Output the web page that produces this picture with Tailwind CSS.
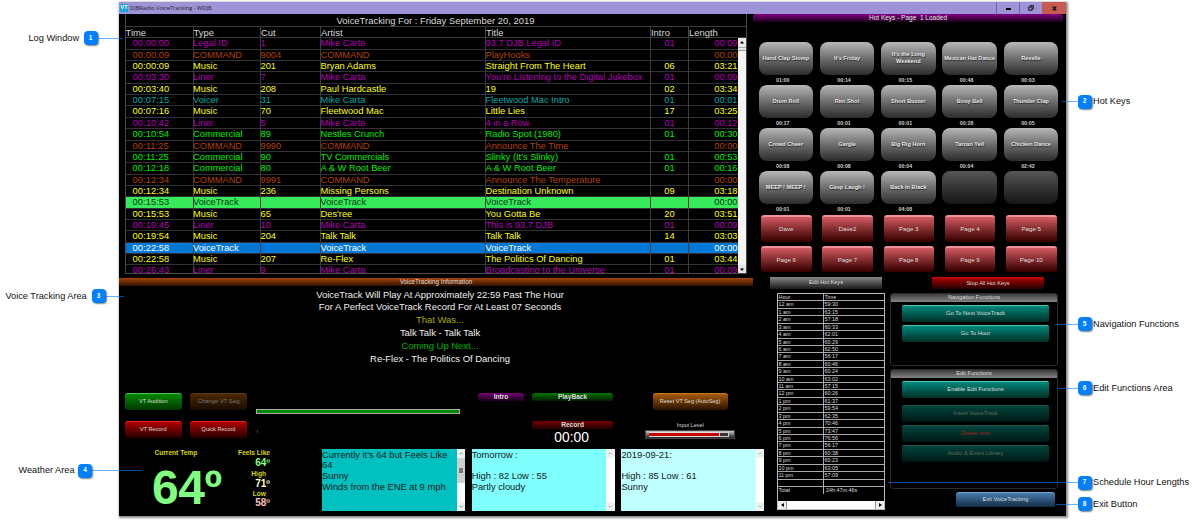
<!DOCTYPE html>
<html lang="en">
<head>
    <meta charset="UTF-8">
    <meta name="viewport" content="width=device-width, initial-scale=1.0">
    <title>DJBRadio VoiceTracking - WDJB</title>
    <script src="https://cdn.jsdelivr.net/npm/@tailwindcss/browser@4"></script>
</head>
<body class="relative w-[1199px] h-[520px] overflow-hidden bg-white font-['Liberation_Sans',Arial,sans-serif] text-[9.3px] leading-none whitespace-nowrap">

    <!-- Application window -->
    <div class="ml-[119px] mt-[2px] w-[947px] h-[514px] bg-black text-white shadow-[1px_1px_2px_1px_rgba(0,0,0,0.45)]">

        <!-- Title bar -->
        <div class="flex h-[12px] bg-[#9f93d8] text-[#222] text-[6.4px]">
            <div class="ml-[1px] mr-[2px] w-[8px] h-[8px] mt-[2px] bg-[#16a5dc] text-white text-[5.5px] font-bold flex items-center justify-center">VT</div>
            <div class="flex-1 pt-[3px] font-['Open_Sans',sans-serif] text-[5.7px] leading-[6px]">DJBRadio VoiceTracking - WDJB</div>
            <div class="w-[23px] border-l border-[#6e659c] flex items-center justify-center"><span class="w-[5px] h-[1.5px] mt-[2px] bg-black"></span></div>
            <div class="w-[23px] border-l border-[#6e659c] flex items-center justify-center">
                <svg class="w-[6px] h-[6px]" viewBox="0 0 6 6" fill="none" stroke="#111" stroke-width="1"><path d="M2 1.5V.7h3.3v3.2h-.8"/><rect x=".8" y="2" width="3.2" height="3.2"/></svg>
            </div>
            <div class="w-[24px] bg-[#c65a50] flex items-center justify-center">
                <svg class="w-[5px] h-[5px]" viewBox="0 0 5 5" stroke="#111" stroke-width="1.3"><path d="M.7.5l3.6 4M4.3.5L.7 4.5"/></svg>
            </div>
        </div>

        <!-- Log and hot keys -->
        <div class="flex h-[263px]">
            <div class="w-[634px] pl-[5.5px]">
                <div class="w-[622px] h-[260px] border border-t-0 border-[#4a4a4a] overflow-hidden text-[#d8d8d8]">
                    <div class="h-[12px] text-center text-[9.45px] leading-[13px]">VoiceTracking For : Friday September 20, 2019</div>
                    <div class="grid grid-cols-[67px_67.5px_60px_165px_165px_38px_57.5px] h-[12.3px] border-y border-[#3a3a3a] leading-[11px] text-[9.45px]">
                        <div>Time</div>
                        <div class="border-l border-[#444]">Type</div>
                        <div class="border-l border-[#444]">Cut</div>
                        <div class="border-l border-[#444]">Artist</div>
                        <div class="border-l border-[#444]">Title</div>
                        <div class="border-l border-[#444]">Intro</div>
                        <div class="border-l border-[#444]">Length</div>
                    </div>
                    <div class="flex h-[235px]">
                        <div id="log" class="w-[612px] overflow-hidden"></div>
                        <div class="w-[8px] bg-[#f4f4f4] flex flex-col items-center justify-between text-black">
                            <div class="w-full h-[13px] bg-[#e8e8e8] border-b border-[#999] flex flex-col items-center pt-[3px]">
                                <svg class="w-[4px] h-[3px]" viewBox="0 0 4 3"><path d="M0 2.5L2 0l2 2.5z"/></svg>
                                <span class="w-full border-t border-[#aaa] mt-[3px]"></span>
                            </div>
                            <div class="w-full h-[8px] bg-[#e4e4e4] flex items-center justify-center">
                                <svg class="w-[4px] h-[3px]" viewBox="0 0 4 3"><path d="M0 .5L2 3 4 .5z"/></svg>
                            </div>
                        </div>
                    </div>
                </div>
            </div>
            <div class="flex-1">
                <div class="w-[310px] h-[8px] rounded-t-[3px] bg-linear-to-b from-[#850085] to-[#1c001c] text-center text-[6.5px] leading-[8px] text-[#e8e8e8]">Hot Keys - Page &nbsp;1 Loaded</div>
                <div id="hotKeys" class="mt-[20px] ml-[5.5px] grid grid-cols-[repeat(5,54.5px)] gap-x-[6.8px]"></div>
                <div id="pages" class="ml-[8px] mt-[1px] grid grid-cols-[repeat(5,50.5px)] gap-x-[10.75px] gap-y-[4px]"></div>
            </div>
        </div>

        <div class="flex h-[239px]">
            <!-- Voice tracking and weather -->
            <div class="w-[651px]">
                <div class="mt-[1px] w-[634px] h-[8px] bg-linear-to-b from-[#a84408] to-[#2e1000] text-center text-[6.3px] leading-[8px] text-[#dedede]">VoiceTracking Information</div>
                <div class="w-[642px] h-[107px] pt-[3px] text-center text-[9.45px] leading-[12.9px] text-[#f0f0f0]">
                    <p class="-mb-[0.5px]">VoiceTrack Will Play At Approximately 22:59 Past The Hour</p>
                    <p class="-mb-[0.5px]">For A Perfect VoiceTrack Record For At Least 07 Seconds</p>
                    <p class="text-[#a8a800]">That Was...</p>
                    <p class="mt-[0.3px]">Talk Talk - Talk Talk</p>
                    <p class="mt-[0.3px] text-[#00b400]">Coming Up Next...</p>
                    <p class="mt-[0.3px]">Re-Flex - The Politics Of Dancing</p>
                </div>

                <div class="flex h-[56px] pl-[6px] text-[5.6px] text-[#ddd]">
                    <div class="grid grid-cols-[56.5px_56.5px] gap-x-[8.8px] gap-y-[11px] content-start">
                        <button class="h-[17px] rounded-[3px] border-t border-[#4cc04c] bg-linear-to-b from-[#008a00] to-[#003800]">VT Audition</button>
                        <button class="h-[17px] rounded-[3px] border-t border-[#5c3a0c] bg-linear-to-b from-[#4c2800] to-[#180c00] text-[#777] text-[5.9px]">Change VT Seg</button>
                        <button class="h-[17px] rounded-[3px] border-t border-[#f02020] bg-linear-to-b from-[#b00000] to-[#280000]">VT Record</button>
                        <button class="h-[17px] rounded-[3px] border-t border-[#f02020] bg-linear-to-b from-[#b00000] to-[#280000]">Quick Record</button>
                    </div>
                    <div class="ml-[9px] w-[204px] pt-[16px]">
                        <div class="h-[5px] border border-[#aaa] bg-[#008a00]"></div>
                        <div class="mt-[16px] ml-[1px] w-[1px] h-[3px] bg-[#006a00]"></div>
                    </div>
                    <div class="ml-[18.5px] w-[45.5px]">
                        <div class="h-[8px] rounded-t-[3px] bg-linear-to-b from-[#780078] to-[#180018] text-center text-[6.6px] leading-[8px] font-bold">Intro</div>
                    </div>
                    <div class="ml-[8px] w-[81.5px] text-center">
                        <div class="h-[8px] rounded-t-[3px] bg-linear-to-b from-[#007a00] to-[#001c00] text-[6.6px] leading-[8px] font-bold">PlayBack</div>
                        <div class="mt-[20px] h-[8px] rounded-t-[3px] bg-linear-to-b from-[#7a0000] to-[#200000] text-[6.6px] leading-[8px] font-bold">Record</div>
                        <div class="-ml-[2px] text-[13.8px] leading-[17px] text-white">00:00</div>
                    </div>
                    <div class="ml-[32px] w-[90px] flex flex-col items-center">
                        <button class="-ml-[0.5px] w-[75px] h-[17px] rounded-[3px] border-t border-[#c8791c] bg-linear-to-b from-[#a85c10] to-[#2a1400] text-[5.5px]">Reset VT Seg (AutoSeg)</button>
                        <div class="mt-[12px] text-[5.5px] leading-[6px]">Input Level</div>
                        <div class="mt-[1.5px] w-full h-[9px] border border-[#444] bg-linear-to-b from-[#ccc] to-[#222] px-[3px] py-[1px] flex">
                            <span class="w-[70px] h-[5px] border-y border-[#ddd] bg-[#c80000]"></span>
                            <span class="w-[10px] h-[5px] border border-[#ccc] bg-[#333]"></span>
                        </div>
                    </div>
                </div>

                <div class="flex h-[62px]">
                    <div class="ml-[33px] w-[70px] font-bold">
                        <div class="ml-[2.5px] text-[6.6px] leading-[8px] text-[#d8d800]">Current Temp</div>
                        <div class="mt-[5.5px] text-[48px] leading-[50px] text-[#80ff80] tracking-[-0.5px]">64º</div>
                    </div>
                    <div class="ml-[8px] w-[41px] pr-[1px] text-right font-bold text-[6.6px] leading-[8px] text-[#d8d800]">
                        <p>Feels Like</p>
                        <p class="text-[10px] leading-[11.5px] text-[#80ff80]">64º</p>
                        <p class="pr-[4px] leading-[9px]">High</p>
                        <p class="text-[10px] leading-[11px] text-[#ffffc0]">71º</p>
                        <p class="pr-[4px] leading-[9px]">Low</p>
                        <p class="text-[10px] leading-[10px] text-[#ffc0c0]">58º</p>
                    </div>
                    <div class="ml-[51px] flex gap-[6.7px] text-[9.35px] leading-[10.9px] text-[#102020]">
                        <div class="w-[143px] flex bg-[#00c0c0]">
                            <div class="flex-1 pt-[0.5px]">Currently it's 64 but Feels Like<br>64<br>Sunny<br>Winds from the ENE at 9 mph</div>
                            <div class="w-[8.5px] bg-white flex flex-col items-center justify-between">
                                <svg class="w-full h-[9px] bg-[#f0f0f0]" viewBox="0 0 9 9" fill="none" stroke="#888"><path d="M2.7 5.5l1.8-1.8 1.8 1.8"/></svg>
                                <div class="w-full h-[25px] -mt-[19px] bg-[#cfcfcf] flex items-center justify-center"><span class="w-[4px] h-[5px] bg-[#777]"></span></div>
                                <svg class="w-full h-[9px] bg-[#f0f0f0]" viewBox="0 0 9 9" fill="none" stroke="#888"><path d="M2.7 3.5l1.8 1.8 1.8-1.8"/></svg>
                            </div>
                        </div>
                        <div class="w-[143px] flex bg-[#80ffff]">
                            <div class="flex-1 pt-[0.5px]">Tomorrow :<br><br>High : 82 Low : 55<br>Partly cloudy</div>
                            <div class="w-[8.5px] bg-white flex flex-col items-center justify-between">
                                <svg class="w-full h-[9px] bg-[#f0f0f0]" viewBox="0 0 9 9" fill="none" stroke="#aaa"><path d="M2.7 5.5l1.8-1.8 1.8 1.8"/></svg>
                                <svg class="w-full h-[9px] bg-[#f0f0f0]" viewBox="0 0 9 9" fill="none" stroke="#aaa"><path d="M2.7 3.5l1.8 1.8 1.8-1.8"/></svg>
                            </div>
                        </div>
                        <div class="w-[143px] flex bg-[#c0ffff]">
                            <div class="flex-1 pt-[0.5px]">2019-09-21:<br><br>High : 85 Low : 61<br>Sunny</div>
                            <div class="w-[8.5px] bg-white flex flex-col items-center justify-between">
                                <svg class="w-full h-[9px] bg-[#f0f0f0]" viewBox="0 0 9 9" fill="none" stroke="#aaa"><path d="M2.7 5.5l1.8-1.8 1.8 1.8"/></svg>
                                <svg class="w-full h-[9px] bg-[#f0f0f0]" viewBox="0 0 9 9" fill="none" stroke="#aaa"><path d="M2.7 3.5l1.8 1.8 1.8-1.8"/></svg>
                            </div>
                        </div>
                    </div>
                </div>
            </div>

            <!-- Schedule and functions -->
            <div class="w-[296px] text-[5.6px] text-[#ddd]">
                <div class="flex gap-[50px]">
                    <button class="w-[112px] h-[12px] bg-linear-to-b from-[#888] to-[#1c1c1c]">Edit Hot Keys</button>
                    <button class="w-[112px] h-[12px] border-t-2 border-[#c00000] bg-linear-to-b from-[#980000] to-[#280000]">Stop All Hot Keys</button>
                </div>
                <div class="flex mt-[4px] ml-[7px]">
                    <div class="w-[108px] h-[217px] border border-[#bbb] flex flex-col justify-between text-[5.4px] leading-[7.4px]">
                        <div id="schedule"></div>
                        <div class="h-[8px] bg-white flex justify-between text-black">
                            <div class="w-[9px] bg-[#eee] border-r border-[#999] flex items-center justify-center"><svg class="w-[3px] h-[4px]" viewBox="0 0 3 4"><path d="M3 0L0 2l3 2z"/></svg></div>
                            <div class="w-[9px] bg-[#eee] border-l border-[#999] flex items-center justify-center"><svg class="w-[3px] h-[4px]" viewBox="0 0 3 4"><path d="M0 0l3 2-3 2z"/></svg></div>
                        </div>
                    </div>
                    <div class="ml-[5px] w-[168px]">
                        <div class="h-[73px] border border-[#2c2c2c] rounded-[3px] overflow-hidden">
                            <div class="h-[8px] bg-linear-to-b from-[#3c3c3c] to-[#858585] text-center leading-[7px]">Navigation Functions</div>
                            <div class="flex flex-col gap-[3.7px] pt-[3px] pl-[11px] text-[5.8px]">
                                <button class="w-[147px] h-[16.5px] rounded-[2px] border-t border-[#4cc4b0] bg-linear-to-b from-[#00897a] to-[#003029]">Go To Next VoiceTrack</button>
                                <button class="w-[147px] h-[16.5px] rounded-[2px] border-t border-[#4cc4b0] bg-linear-to-b from-[#00897a] to-[#003029]">Go To Hour</button>
                            </div>
                        </div>
                        <div class="mt-[3px] h-[120px] border border-[#2c2c2c] rounded-[3px] overflow-hidden">
                            <div class="h-[8px] bg-linear-to-b from-[#3c3c3c] to-[#858585] text-center leading-[7px]">Edit Functions</div>
                            <div class="flex flex-col gap-[3.5px] pt-[3px] pl-[11px] text-[5.8px]">
                                <button class="w-[147px] h-[16.5px] mb-[4px] rounded-[2px] border-t border-[#4cc4b0] bg-linear-to-b from-[#00897a] to-[#003029]">Enable Edit Functions</button>
                                <button class="w-[147px] h-[16.5px] rounded-[2px] border-t border-[#24564e] bg-linear-to-b from-[#00453d] to-[#001814] text-[#666]">Insert VoiceTrack</button>
                                <button class="w-[147px] h-[16.5px] rounded-[2px] border-t border-[#24564e] bg-linear-to-b from-[#00453d] to-[#001814] text-[#a02424]">Delete Item</button>
                                <button class="w-[147px] h-[16.5px] rounded-[2px] border-t border-[#24564e] bg-linear-to-b from-[#00453d] to-[#001814] text-[#666]">Audio &amp; Event Library</button>
                            </div>
                        </div>
                        <button class="mt-[3px] ml-[66px] block w-[99px] h-[15px] rounded-t-[3px] rounded-b-[1px] border-t border-[#6ea0cc] bg-linear-to-b from-[#477eb0] to-[#142c44]">Exit VoiceTracking</button>
                    </div>
                </div>
            </div>
        </div>
    </div>

    <!-- Numbered callouts laid over the window -->
    <div id="callouts" class="text-[#111] text-[9.2px]"></div>

    <script>
        const LINER = 'text-[#b400b4]';
        const COMMAND = 'text-[#b04000]';
        const MUSIC = 'text-[#ffff00]';
        const VOICER = 'text-[#00a8a8]';
        const SPOT = 'text-[#00ec00]';
        const NEXT_VT = 'bg-[#36ea5c] text-[#06380f]';
        const CURRENT_VT = 'bg-[#0078d7] text-white';

        const log = [
            [LINER, '00:00:00', 'Legal ID', '1', 'Mike Carta', '93.7 DJB Legal ID', '01', '00:09'],
            [COMMAND, '00:00:09', 'COMMAND', '9004', 'COMMAND', 'PlayHooks', '', '00:00'],
            [MUSIC, '00:00:09', 'Music', '201', 'Bryan Adams', 'Straight From The Heart', '06', '03:21'],
            [LINER, '00:03:30', 'Liner', '7', 'Mike Carta', "You're Listening to the Digital Jukebox", '01', '00:09'],
            [MUSIC, '00:03:40', 'Music', '208', 'Paul Hardcastle', '19', '02', '03:34'],
            [VOICER, '00:07:15', 'Voicer', '31', 'Mike Carta', 'Fleetwood Mac Intro', '01', '00:01'],
            [MUSIC, '00:07:16', 'Music', '70', 'Fleetwood Mac', 'Little Lies', '17', '03:25'],
            [LINER, '00:10:42', 'Liner', '5', 'Mike Carta', '4 in a Row', '01', '00:12'],
            [SPOT, '00:10:54', 'Commercial', '89', 'Nestles Crunch', 'Radio Spot (1980)', '01', '00:30'],
            [COMMAND, '00:11:25', 'COMMAND', '9990', 'COMMAND', 'Announce The Time', '', '00:00'],
            [SPOT, '00:11:25', 'Commercial', '90', 'TV Commercials', "Slinky (It's Slinky)", '01', '00:53'],
            [SPOT, '00:12:18', 'Commercial', '80', 'A & W Root Beer', 'A & W Root Beer', '01', '00:16'],
            [COMMAND, '00:12:34', 'COMMAND', '9991', 'COMMAND', 'Announce The Temperature', '', '00:00'],
            [MUSIC, '00:12:34', 'Music', '236', 'Missing Persons', 'Destination Unknown', '09', '03:18'],
            [NEXT_VT, '00:15:53', 'VoiceTrack', '', 'VoiceTrack', 'VoiceTrack', '', '00:00'],
            [MUSIC, '00:15:53', 'Music', '65', "Des'ree", 'You Gotta Be', '20', '03:51'],
            [LINER, '00:19:45', 'Liner', '10', 'Mike Carta', 'This is 93.7 DJB', '01', '00:09'],
            [MUSIC, '00:19:54', 'Music', '204', 'Talk Talk', 'Talk Talk', '14', '03:03'],
            [CURRENT_VT, '00:22:58', 'VoiceTrack', '', 'VoiceTrack', 'VoiceTrack', '', '00:00'],
            [MUSIC, '00:22:58', 'Music', '207', 'Re-Flex', 'The Politics Of Dancing', '01', '03:44'],
            [LINER, '00:26:43', 'Liner', '9', 'Mike Carta', 'Broadcasting to the Universe', '01', '00:09'],
        ];
        document.getElementById('log').innerHTML = log.map(([style, time, ...cells]) => `
            <div class="grid grid-cols-[67px_67.5px_60px_165px_165px_38px_49.5px] h-[11.37px] leading-[11.5px] border-b border-[#333] ${style}">
                <div class="pl-[7px] tracking-[0.08px]">${time}</div>
                ${cells.map((c, i) => `<div class="${i === 4 ? 'border-l border-[#3a3a3a] text-center' : i === 5 ? 'border-l border-[#3a3a3a] text-right' : 'border-l border-[#3a3a3a]'}"><span class="${i < 4 ? '-ml-[0.5px]' : ''}">${c.replace('&', '&amp;')}</span></div>`).join('')}
            </div>`).join('');

        const hotKeys = [
            ['Hand Clap Stomp', '01:00'], ["It's Friday", '00:14'], ["It's the Long Weekend", '00:15'], ['Mexican Hat Dance', '00:48'], ['Revelle', '00:03'],
            ['Drum Roll', '00:17'], ['Rim Shot', '00:01'], ['Short Buzzer', '00:01'], ['Bouy Bell', '00:28'], ['Thunder Clap', '00:05'],
            ['Crowd Cheer', '00:08'], ['Gargle', '00:08'], ['Big Rig Horn', '00:04'], ['Tarzan Yell', '00:04'], ['Chicken Dance', '02:42'],
            ['MEEP ! MEEP !', '00:01'], ['Gasp Laugh !', '00:01'], ['Back In Black', '04:08'], ['', ''], ['', ''],
        ];
        document.getElementById('hotKeys').innerHTML = hotKeys.map(([name, time]) => `
            <div class="h-[43px]">
                <button class="block w-full h-[32.5px] rounded-[8px] text-[5.6px] leading-[7px] font-bold text-[#e6e6e6] [text-shadow:0.5px_0.5px_1px_#222] bg-linear-to-b ${name.length > 18 ? 'whitespace-normal px-[6px]' : ''} ${name ? 'from-[#b8b8b8] to-[#2c2c2c]' : 'from-[#565656] to-[#161616]'}">${name}</button>
                <div class="pr-[6px] text-center text-[5.3px] leading-[10px] font-bold text-[#ccc]">${time}</div>
            </div>`).join('');

        const pages = ['Dave', 'Dave2', 'Page 3', 'Page 4', 'Page 5', 'Page 6', 'Page 7', 'Page 8', 'Page 9', 'Page 10'];
        document.getElementById('pages').innerHTML = pages.map(p => `
            <button class="h-[26.5px] rounded-[3px] border-t-2 border-[#f09098] bg-linear-to-b from-[#d45c64] to-[#340000] text-[6.2px] text-[#ddd]">${p}</button>`).join('');

        const lengths = ['59:30', '63:15', '57:18', '60:33', '62:01', '60:29', '62:50', '56:17', '60:46', '60:24', '63:02', '57:15',
            '60:26', '61:37', '59:54', '62:35', '70:46', '73:47', '76:56', '56:17', '60:38', '60:23', '63:05', '57:09'];
        const schedule = [['Hour', 'Time']];
        lengths.forEach((t, h) => schedule.push([`${h % 12 || 12} ${h < 12 ? 'am' : 'pm'}`, t]));
        schedule.push(['', ''], ['Total', '&nbsp;24h:47m:46s']);
        document.getElementById('schedule').innerHTML = schedule.map(([h, t], i) => `
            <div class="flex ${i === 26 ? 'h-[7.43px]' : 'h-[7.43px] border-b border-[#aaa]'}">
                <div class="w-[44.5px] pl-[0.5px]">${h}</div>
                <div class="border-l border-[#aaa] pl-[1px]">${t}</div>
            </div>`).join('');

        // label, label x, badge x, y, leader start, leader end
        const callouts = [
            ['Log Window', 28.5, 83.5, 38, 97, 123],
            ['Hot Keys', 1093, 1077.5, 101.5, 1062, 1078],
            ['Voice Tracking Area', 5.5, 91.5, 296, 105, 124],
            ['Weather Area', 18.5, 78, 470.5, 92, 142],
            ['Navigation Functions', 1093, 1077.5, 324, 1055, 1078],
            ['Edit Functions Area', 1093, 1077.5, 388, 1058, 1078],
            ['Schedule Hour Lengths', 1093, 1077.5, 482.5, 888, 1078],
            ['Exit Button', 1093, 1077.5, 504, 1056, 1078],
        ];
        document.getElementById('callouts').innerHTML = callouts.map(([label, x, badge, y, from, to], i) => `
            <div class="absolute h-px bg-[#0080ff]/60" style="left:${from}px;top:${Math.floor(y)}px;width:${to - from}px"></div>
            <div class="absolute w-[14px] h-[14px] rounded-[4px] bg-[#0080ff] shadow-[1px_1px_1.5px_rgba(0,0,0,0.5)] text-white text-[6.5px] font-bold flex items-center justify-center" style="left:${badge}px;top:${y - 7}px">${i + 1}</div>
            <div class="absolute leading-[12px]" style="left:${x}px;top:${y - 6.2}px">${label}</div>`).join('');
    </script>
</body>
</html>
